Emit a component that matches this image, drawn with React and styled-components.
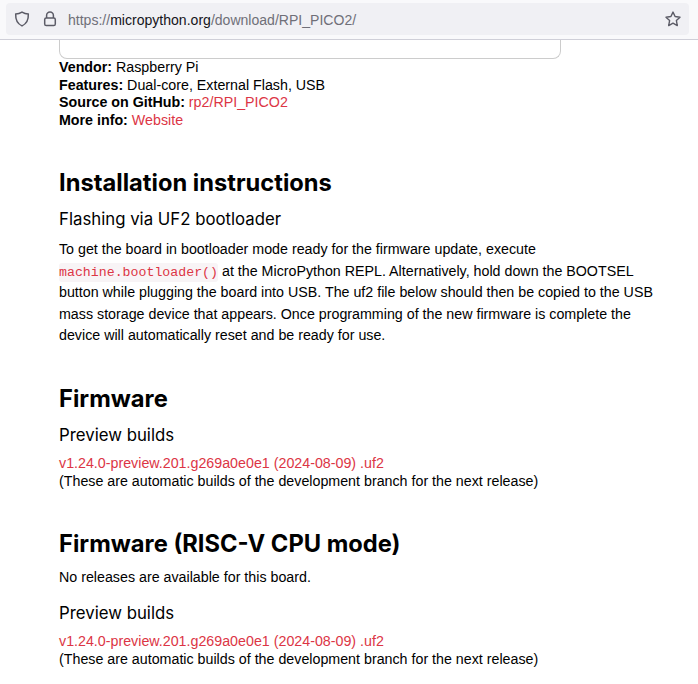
import React from 'react';
import styled, { createGlobalStyle } from 'styled-components';

const GlobalStyle = createGlobalStyle`
  html, body {
    margin: 0;
    padding: 0;
    background: #fff;
    overflow: hidden;
  }
  body {
    font-family: 'Liberation Sans', Arial, sans-serif;
    font-size: 14.26px;
    color: #000;
  }
`;

const Page = styled.div`
  width: 698px;
  height: 684px;
  overflow: hidden;
`;

const Toolbar = styled.div`
  height: 32px;
  padding: 3px 9px 4px 6px;
  background: #f9f9fb;
  border-bottom: 1px solid #cfcfd8;
`;

const UrlBar = styled.div`
  height: 32px;
  display: flex;
  align-items: center;
  background: #f0f0f4;
  border-radius: 4px;
  padding: 0 8px;
`;

const IconSlot = styled.span`
  display: flex;
  align-items: center;
  margin-right: ${p => p.$gap || 0}px;
  color: #5b5b66;
`;

const Url = styled.div`
  flex: 1;
  font-size: 14.05px;
  padding-top: 1px;
  color: #6f6f78;
  white-space: nowrap;
`;

const Host = styled.span`
  color: #15141a;
`;

const Content = styled.div`
  padding-left: 59px;
  width: 660px;
  box-sizing: border-box;
`;

const ImageBox = styled.div`
  width: 502px;
  height: 19px;
  box-sizing: border-box;
  border: 1px solid #ccc;
  border-top: none;
  border-radius: 0 0 8px 8px;
`;

const Specs = styled.div`
  line-height: 17.6px;
  margin-bottom: 39px;
`;

const Link = styled.a`
  color: #dc3545;
  text-decoration: none;
`;

const H2 = styled.h2`
  margin: 0 0 ${p => p.$after || 11}px;
  font-family: Inter, 'Open Sans', sans-serif;
  font-size: 23.7px;
  line-height: 30px;
  font-weight: 700;
`;

const H3 = styled.h3`
  margin: 0 0 10px;
  font-family: Inter, 'Open Sans', sans-serif;
  font-size: 16.8px;
  line-height: 20px;
  font-weight: 400;
`;

const Para = styled.p`
  margin: 0 0 ${p => p.$after || 0}px;
  line-height: 21.4px;
`;

const Code = styled.code`
  font-family: 'Liberation Mono', monospace;
  font-size: 13.25px;
  line-height: 1;
  color: #dc3545;
  background: #f8f4f6;
  border-radius: 3px;
  padding: 2px 0;
`;

const Build = styled.div`
  line-height: 17.6px;
  margin-bottom: ${p => p.$after || 0}px;
`;

const ShieldIcon = () => (
  <svg width="16" height="16" viewBox="0 0 16 16" fill="none" stroke="currentColor" strokeWidth="1.5">
    <path d="M8 1.2 C10 2.4 12 3 14.3 3.1 C14.6 8.6 12.8 12.6 8 14.9 C3.2 12.6 1.4 8.6 1.7 3.1 C4 3 6 2.4 8 1.2 Z" />
  </svg>
);

const LockIcon = () => (
  <svg width="14" height="16" viewBox="0 0 14 16" fill="none" stroke="currentColor" strokeWidth="1.5">
    <path d="M3.6 7 V4.4 a3.4 3.4 0 0 1 6.8 0 V7" />
    <rect x="1.7" y="7" width="10.6" height="7.6" rx="1.6" />
  </svg>
);

const StarIcon = () => (
  <svg width="16" height="16" viewBox="0 0 16 16" fill="none" stroke="currentColor" strokeWidth="1.4" strokeLinejoin="round">
    <path d="M8 1.1 L10.1 5.5 L15 6.2 L11.4 9.6 L12.3 14.6 L8 12.2 L3.7 14.6 L4.6 9.6 L1 6.2 L5.9 5.5 Z" />
  </svg>
);

const previewVersion = 'v1.24.0-preview.201.g269a0e0e1 (2024-08-09) .uf2';
const previewNote = '(These are automatic builds of the development branch for the next release)';

export default function App() {
  return (
    <Page>
      <GlobalStyle />
      <Toolbar>
        <UrlBar>
          <IconSlot $gap={13}><ShieldIcon /></IconSlot>
          <IconSlot $gap={11}><LockIcon /></IconSlot>
          <Url>https://<Host>micropython.org</Host>/download/RPI_PICO2/</Url>
          <IconSlot><StarIcon /></IconSlot>
        </UrlBar>
      </Toolbar>
      <Content>
        <ImageBox />
        <Specs>
          <div><b>Vendor:</b> Raspberry Pi</div>
          <div><b>Features:</b> Dual-core, External Flash, USB</div>
          <div><b>Source on GitHub:</b> <Link>rp2/RPI_PICO2</Link></div>
          <div><b>More info:</b> <Link>Website</Link></div>
        </Specs>
        <H2>Installation instructions</H2>
        <H3>Flashing via UF2 bootloader</H3>
        <Para $after={38}>
          To get the board in bootloader mode ready for the firmware update, execute{' '}
          <Code>machine.bootloader()</Code> at the MicroPython REPL. Alternatively, hold down the BOOTSEL
          button while plugging the board into USB. The uf2 file below should then be copied to the USB
          mass storage device that appears. Once programming of the new firmware is complete the
          device will automatically reset and be ready for use.
        </Para>
        <H2>Firmware</H2>
        <H3>Preview builds</H3>
        <Build $after={38}>
          <Link>{previewVersion}</Link>
          <div>{previewNote}</div>
        </Build>
        <H2 $after={8}>Firmware (RISC-V CPU mode)</H2>
        <Para $after={15}>No releases are available for this board.</Para>
        <H3>Preview builds</H3>
        <Build>
          <Link>{previewVersion}</Link>
          <div>{previewNote}</div>
        </Build>
      </Content>
    </Page>
  );
}
